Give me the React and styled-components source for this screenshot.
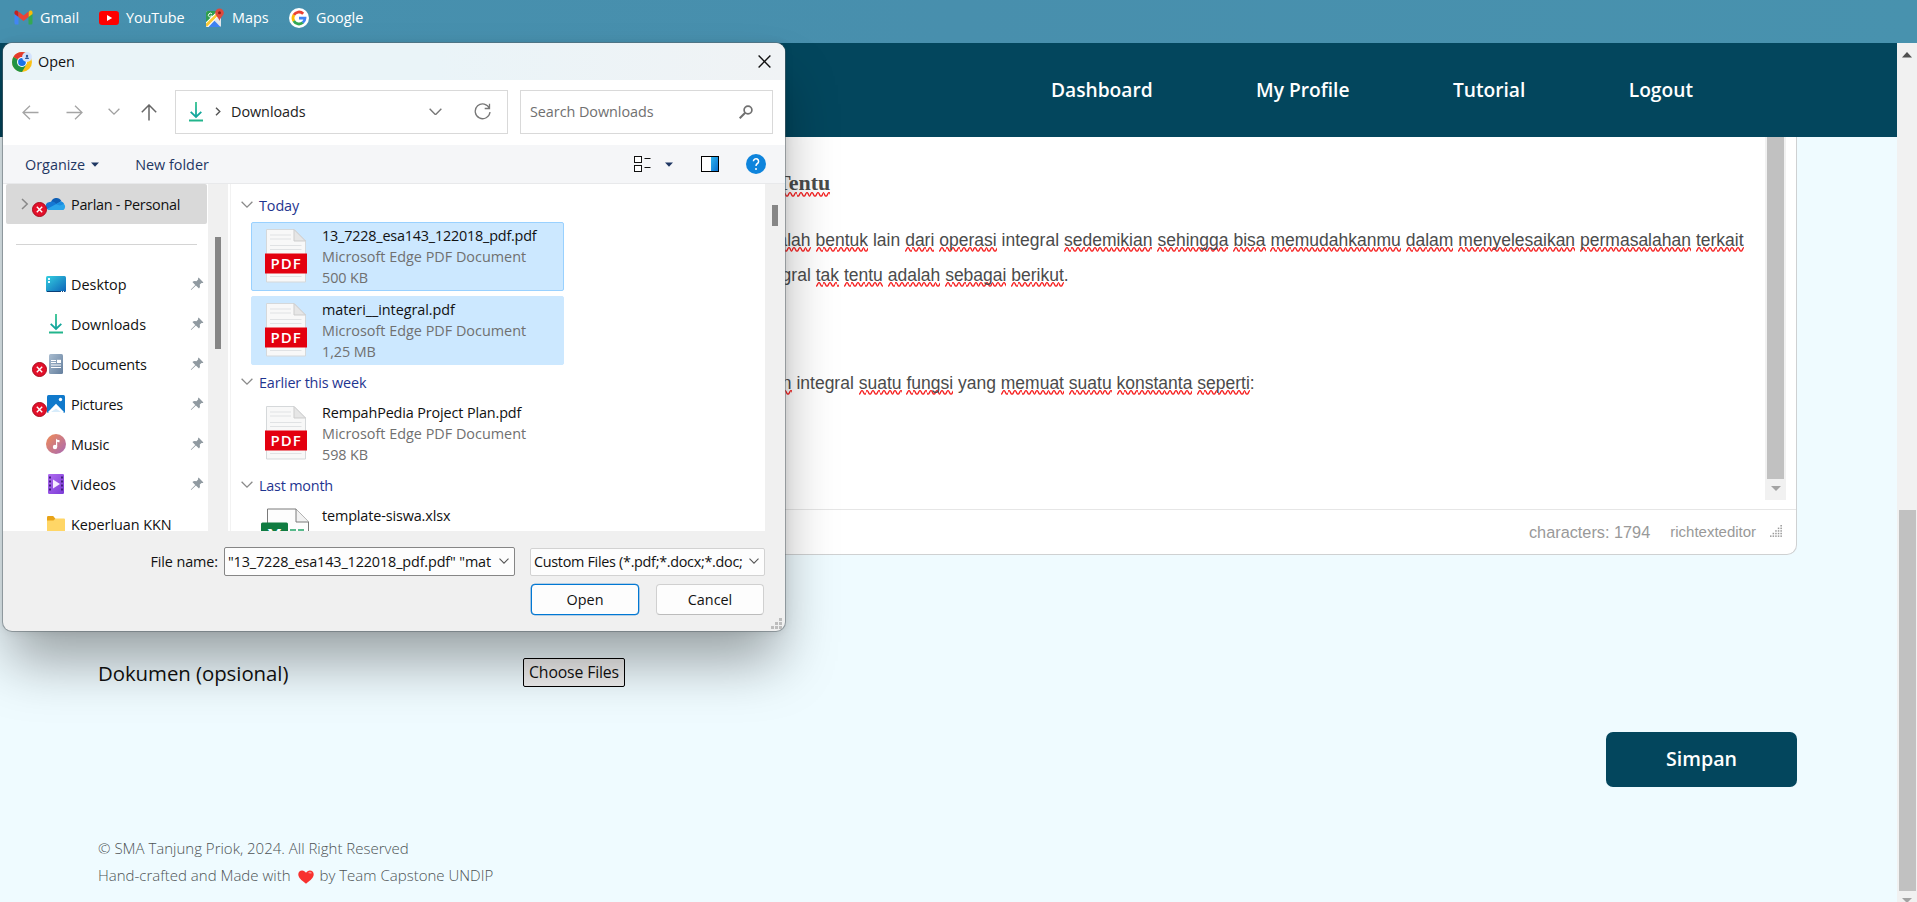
import React from "react";
import styled, { createGlobalStyle, css } from "styled-components";

const ui = `"Open Sans", "Noto Sans", sans-serif`;

const GlobalStyle = createGlobalStyle`
  * { box-sizing: border-box; }
  body { margin: 0; background: #effbff; font-family: ${ui}; overflow: hidden; }
  svg { display: block; flex: none; }
`;

const Screen = styled.div`
  position: relative;
  width: 1917px;
  height: 902px;
  display: flex;
  flex-direction: column;
  overflow: hidden;
  background: #effbff;
`;

/* ---------- bookmarks ---------- */
const BookmarkBar = styled.div`
  flex: none;
  height: 43px;
  padding: 0 0 8px 14px;
  display: flex;
  align-items: center;
  background: linear-gradient(90deg, #4690ae, #488fad 50%, #4892ae);
`;
const Bookmark = styled.div`
  display: flex;
  align-items: center;
  gap: 7px;
  width: ${(p) => p.$width}px;
  color: #fff;
  font-size: 14.4px;
  letter-spacing: ${(p) => p.$track || 0}px;
  white-space: nowrap;
`;

/* ---------- page ---------- */
const Viewport = styled.div`
  flex: 1;
  display: flex;
  min-height: 0;
`;
const Page = styled.div`
  flex: 1;
  display: flex;
  flex-direction: column;
  min-width: 0;
`;
const Nav = styled.nav`
  flex: none;
  height: 94px;
  padding: 0 204px 0 0;
  display: flex;
  justify-content: flex-end;
  align-items: center;
  gap: 103.4px;
  background: #03465d;
`;
const NavLink = styled.a`
  color: #fff;
  font-size: 19.2px;
  font-weight: 600;
  line-height: 28px;
`;
const Editor = styled.section`
  flex: none;
  width: 1274px;
  height: 418px;
  margin-left: 523px;
  display: flex;
  flex-direction: column;
  background: #fff;
  border: 1px solid #cfd1d2;
  border-top: 0;
  border-radius: 0 0 10px 10px;
`;
const EditorBody = styled.div`
  flex: none;
  display: flex;
  height: 373px;
  padding-right: 10px;
  padding-bottom: 9px;
  border-bottom: 1px solid #e6e6e6;
`;
const EditorText = styled.div`
  flex: 1;
  min-width: 0;
  color: #4b4b4b;
  font: 17.5px/35px "Liberation Sans", Arial, sans-serif;
`;
const Heading = styled.h2`
  margin: 28px 0 22px 252px;
  font: bold 22px/36px "Liberation Serif", "Times New Roman", serif;
`;
const Line = styled.p`
  margin: 0 0 ${(p) => p.$after || 0}px ${(p) => p.$indent}px;
  width: ${(p) => (p.$width ? `${p.$width}px` : "auto")};
  white-space: ${(p) => (p.$width ? "normal" : "nowrap")};
  text-align-last: ${(p) => (p.$width ? "justify" : "left")};
`;
const wave = encodeURIComponent(
  `<svg xmlns="http://www.w3.org/2000/svg" width="5.6" height="5" viewBox="0 0 5.6 5"><path d="M-1.400 2.400Q0 6 1.400 2.400T4.200 2.400T7 2.400" fill="none" stroke="#f61c1c" stroke-width="1.300"/></svg>`
);
const Misspelt = styled.span`
  padding-bottom: 2px;
  background: url("data:image/svg+xml,${wave}") repeat-x left bottom / 5.6px 5px;
`;
const InnerScroll = styled.div`
  width: 21px;
  padding: 0 2px;
  background: #f1f1f1;
`;
const InnerThumb = styled.div`
  height: 342px;
  margin-bottom: 7px;
  background: #c1c1c1;
`;
const EditorFooter = styled.div`
  flex: 1;
  display: flex;
  justify-content: flex-end;
  align-items: center;
  padding: 1px 14px 0 0;
  color: #999;
  font: 16.3px "Liberation Sans", Arial, sans-serif;
  svg { margin: -3px 0 0 14px; }
`;
const Brand = styled.span`
  margin-left: 20px;
  font-size: 15px;
  line-height: 18px;
  margin-top: -1px;
`;
const UploadRow = styled.div`
  flex: none;
  display: flex;
  align-items: center;
  height: 29px;
  margin: 103px 0 0 98px;
`;
const UploadLabel = styled.label`
  width: 425px;
  font-size: 20.4px;
  letter-spacing: -0.05px;
  color: #111;
`;
const ChooseButton = styled.button`
  width: 102px;
  height: 29px;
  padding: 0 0 1px;
  border: 1px solid #000;
  border-radius: 2px;
  background: #efefef;
  color: #111;
  font: 15.8px ${ui};
  letter-spacing: -0.15px;
  white-space: nowrap;
`;
const SaveButton = styled.button`
  flex: none;
  width: 191px;
  height: 55px;
  margin: 45px 0 0 1606px;
  padding: 0 0 3px;
  border: 0;
  border-radius: 7px;
  background: #03465d;
  color: #fff;
  font: 600 19.6px ${ui};
`;
const PageFooter = styled.footer`
  margin: 48px 0 0 98px;
  color: #4d5355;
  font-size: 15px;
  font-weight: 300;
  line-height: 27px;
`;
const FooterLine = styled.div`
  display: flex;
  align-items: center;
  white-space: nowrap;
  svg { margin: 2px 6px 0 7px; }
`;
const PageScroll = styled.div`
  flex: none;
  width: 20px;
  display: flex;
  flex-direction: column;
  align-items: center;
  padding: 9px 0 0 0;
  overflow: hidden;
  background: #f1f1f1;
`;
const PageThumb = styled.div`
  flex: none;
  width: 17px;
  height: 381px;
  margin: 452px 0 7px 1px;
  background: #c1c1c1;
`;

/* ---------- file dialog ---------- */
const Dialog = styled.div`
  position: absolute;
  left: 3px;
  top: 43px;
  width: 782px;
  height: 588px;
  display: flex;
  flex-direction: column;
  border-radius: 9px;
  background: #f0f0f0;
  color: #111;
  font-size: 14.4px;
  box-shadow: 0 0 0 1px rgba(90, 100, 105, 0.5), 0 0 8px rgba(0, 0, 0, 0.1), 0 36px 56px -6px rgba(0, 0, 0, 0.36);
`;
const Txt = styled.span`
  letter-spacing: ${(p) => p.$track || 0}px;
  white-space: nowrap;
`;
const TitleBar = styled.div`
  flex: none;
  height: 37px;
  padding: 0 14px 0 9px;
  display: flex;
  align-items: center;
  gap: 6px;
  border-radius: 9px 9px 0 0;
  background: linear-gradient(90deg, #eaf4f8, #eaf4f8 55%, #f0f3f5);
  svg:last-child { margin-left: auto; }
`;
const AddressRow = styled.div`
  flex: none;
  height: 65px;
  padding: 0 12px 1px 19px;
  display: flex;
  align-items: center;
  background: #fff;
`;
const NavIcons = styled.div`
  width: 153px;
  display: flex;
  align-items: center;
  svg:nth-child(2) { margin-left: 27px; }
  svg:nth-child(3) { margin-left: 25px; }
  svg:nth-child(4) { margin-left: 21px; }
`;
const Field = styled.div`
  width: ${(p) => p.$width}px;
  height: 44px;
  margin-right: ${(p) => p.$after || 0}px;
  padding: 0 16px 1px ${(p) => p.$pad}px;
  display: flex;
  align-items: center;
  border: 1px solid #d9d9d9;
  color: ${(p) => p.$color || "#222"};
`;
const Spacer = styled.div`
  flex: ${(p) => (p.$w ? "none" : 1)};
  width: ${(p) => p.$w || 0}px;
`;
const Toolbar = styled.div`
  flex: none;
  height: 39px;
  padding: 0 19px 0 22px;
  display: flex;
  align-items: center;
  background: #f5f6f8;
  border-bottom: 1px solid #e8e9eb;
  color: #1f3763;
`;
const Content = styled.div`
  flex: none;
  height: 347px;
  display: flex;
  overflow: hidden;
  background: #fff;
`;
const Sidebar = styled.div`
  width: 205px;
  padding-left: 3px;
`;
const SideRow = styled.div`
  position: relative;
  height: 40px;
  width: 201px;
  padding: 0 3px 0 38px;
  display: flex;
  align-items: center;
  background: ${(p) => (p.$active ? "#d9d9d9" : "transparent")};
  border-radius: 2px;
`;
const SideIcon = styled.div`
  width: 24px;
  margin-right: 3px;
  display: flex;
  justify-content: center;
`;
const SyncBadge = styled.div`
  position: absolute;
  left: 26px;
  top: 18px;
`;
const Expander = styled.div`
  position: absolute;
  left: 15px;
  top: 14px;
`;
const Separator = styled.div`
  height: 1px;
  width: 181px;
  margin: 20px 0 19px 10px;
  background: #d4d4d4;
`;
const ScrollTrack = styled.div`
  flex: none;
  width: 20px;
  padding: ${(p) => p.$top}px 7px 0;
  background: #f0f0f0;
`;
const ScrollThumb = styled.div`
  height: ${(p) => p.$height}px;
  width: 6px;
  background: #868686;
`;
const FileList = styled.div`
  flex: 1;
  margin-left: 2px;
  padding-left: 11px;
  border-left: 1px solid #f2f2f2;
`;
const Group = styled.div`
  height: 22px;
  margin-top: ${(p) => p.$before}px;
  margin-left: -1px;
  margin-bottom: 6px;
  display: flex;
  align-items: center;
  gap: 6px;
  color: #1f3590;
`;
const FileItem = styled.div`
  width: 313px;
  height: 69px;
  margin: 0 0 5px 9px;
  padding: 0 0 0 9px;
  display: flex;
  border: 1px solid ${(p) => (p.$focused ? "#99d1ff" : p.$selected ? "#cce8ff" : "transparent")};
  border-radius: 2px;
  background: ${(p) => (p.$selected ? "#cce8ff" : "transparent")};
`;
const FileInfo = styled.div`
  margin: 2px 0 0 11px;
  display: flex;
  flex-direction: column;
  line-height: 21px;
`;
const Meta = styled(Txt)`
  color: #707070;
`;
const FileIconBox = styled.div`
  width: 50px;
  padding: 5px 0 0 ${(p) => p.$pad || 0}px;
`;
const DialogFooter = styled.div`
  flex: 1;
  padding: 16px 20px 0 0;
`;
const FooterRow = styled.div`
  display: flex;
  justify-content: flex-end;
  align-items: center;
`;
const Combo = styled.div`
  width: ${(p) => p.$width}px;
  height: ${(p) => p.$height}px;
  margin-left: ${(p) => p.$before}px;
  padding: 0 5px 1px 3px;
  display: flex;
  align-items: center;
  justify-content: space-between;
  border: 1px solid ${(p) => p.$border};
  border-radius: 2px;
  background: #fdfdfd;
`;
const DialogButton = styled.button`
  width: 108px;
  height: 31px;
  margin: 8px ${(p) => (p.$primary ? 17 : 1)}px 0 0;
  padding: 0 0 1px;
  border: 1px solid #d0d0d0;
  border-bottom-color: #bcbcbc;
  border-radius: 4px;
  background: #fdfdfd;
  color: #111;
  font: 14.4px ${ui};
  ${(p) => p.$primary && css`border-color: #0078d4; box-shadow: 0 0 0 0.3px #0067c0;`}
`;
const ResizeGrip = styled.div`
  position: absolute;
  right: 3px;
  bottom: 2px;
`;

/* ---------- icons ---------- */
const Gmail = () => (
  <svg width="19" height="15" viewBox="0 0 19 15">
    <path d="M.5 3v10q0 1.500 1.500 1.500h2.500V6z" fill="#4285f4" />
    <path d="M18.500 3v10q0 1.500-1.500 1.500h-2.500V6z" fill="#34a853" />
    <path d="M14.500 2.500v4.500l4-3V2.500C18.500.6 16.500.2 15.300 1z" fill="#fbbc04" />
    <path d="M.5 2.500V4l4 3V2.500L3.700 1C2.500.2.5.6.5 2.500z" fill="#c5221f" />
    <path d="M4.500 7V1.600l5 3.900 5-3.900V7l-5 3.900z" fill="#ea4335" />
  </svg>
);
const YouTube = () => (
  <svg width="20" height="14" viewBox="0 0 20 14">
    <rect width="20" height="14" rx="3.200" fill="#f00" />
    <path d="M8 4l5.200 3L8 10z" fill="#fff" />
  </svg>
);
const Maps = () => (
  <svg width="20" height="20" viewBox="0 0 20 20">
    <path d="M1 4.500Q1 3 2.500 3H16v14.500q0 1.500-1.500 1.500H2.500Q1 19 1 17.500z" fill="#e3e6ea" />
    <path d="M1 4.500Q1 3 2.500 3H13L1 14.500z" fill="#2f9e4f" />
    <path d="M1 14.300L11.500 4l3 3L3.500 19H2.500Q1 19 1 17.500z" fill="#fff" />
    <path d="M1 15.600L12 5l1.800 1.700L2.200 18.500Q1 18.500 1 17.500z" fill="#fbc934" />
    <path d="M3.500 19l6-6.200 6 6.200z" fill="#3f83f2" />
    <path d="M6.900 5.800A2 2 0 1 0 7.300 8H5.500" stroke="#fff" strokeWidth="1" fill="none" />
    <path d="M14.500.5a4.300 4.300 0 0 1 4.300 4.300c0 3-3.300 4.200-4.300 8.200-1-4-4.300-5.200-4.300-8.200A4.300 4.300 0 0 1 14.500.5z" fill="#dd4b3e" />
    <circle cx="14.500" cy="4.800" r="1.500" fill="#8c1d18" />
  </svg>
);
const Google = () => (
  <svg width="20" height="20" viewBox="0 0 20 20">
    <circle cx="10" cy="10" r="10" fill="#fff" />
    <g fill="none" strokeWidth="2.800">
      <path d="M14.200 5.700A6 6 0 0 0 4.800 7" stroke="#ea4335" />
      <path d="M4.900 6.900a6 6 0 0 0 0 6.200" stroke="#fbbc05" />
      <path d="M4.800 13a6 6 0 0 0 9.100 1.500" stroke="#34a853" />
      <path d="M13.700 14.700A6 6 0 0 0 16 10.200h-6" stroke="#4285f4" />
    </g>
  </svg>
);
const Chrome = () => (
  <svg width="20" height="20" viewBox="0 0 20 20">
    <circle cx="10" cy="10" r="10" fill="#fbc116" />
    <path d="M10 10L1.340 5A10 10 0 0 1 18.660 5z" fill="#e33b2e" />
    <path d="M10 10L1.340 5A10 10 0 0 0 10 20l4.500-7.700z" fill="#229342" />
    <circle cx="10" cy="10" r="5" fill="#fff" />
    <circle cx="10" cy="10" r="3.900" fill="#1a73e8" />
    <circle cx="15" cy="5" r="4.900" fill="#d3e3fd" />
    <circle cx="15" cy="4" r="1.200" fill="#2b5797" />
    <path d="M12.900 7q.2-1.700 2.100-1.700T17.100 7z" fill="#2b5797" />
  </svg>
);
const Stroke = ({ w, h, d, color = "#8a8a8a", sw = 1.3 }) => (
  <svg width={w} height={h} viewBox={`0 0 ${w} ${h}`} fill="none" stroke={color} strokeWidth={sw}>
    <path d={d} />
  </svg>
);
const Close = () => <Stroke w={13} h={13} d="M.6.6l11.800 11.800M12.400.6L.6 12.400" color="#111" sw={1.4} />;
const Back = () => <Stroke w={17} h={15} d="M16.500 7.500H1M8 .7L1 7.500l7 6.800" color="#a5a5a5" />;
const Forward = () => <Stroke w={17} h={15} d="M.5 7.500H16M9 .7l7 6.800-7 6.800" color="#a5a5a5" />;
const ChevronDown = ({ color = "#8a8a8a", w = 12 }) => (
  <svg width={w} height={w * 0.6} viewBox="0 0 12 7.200" fill="none" stroke={color} strokeWidth="1.300">
    <path d="M.6.8L6 6.200 11.400.8" />
  </svg>
);
const Up = () => <Stroke w={16} h={17} d="M8 16.500V1.300M.8 8.200L8 1l7.200 7.200" color="#666" sw={1.5} />;
const Download = () => (
  <svg width="14" height="20" viewBox="0 0 14 20" fill="none">
    <defs>
      <linearGradient id="dl" x1="0" y1="0" x2="0" y2="1">
        <stop offset="0" stopColor="#35c48d" />
        <stop offset="1" stopColor="#10a3a3" />
      </linearGradient>
    </defs>
    <path d="M6.100 0h1.800v15H6.100z" fill="url(#dl)" />
    <path d="M1.700 9.800L7 15l5.300-5.200" stroke="#14a79b" strokeWidth="1.800" />
    <path d="M0 18.500h14" stroke="#22b58c" strokeWidth="2" />
  </svg>
);
const Refresh = () => (
  <Stroke w={17} h={17} d="M15.500 5.500A7.400 7.400 0 1 0 16 9M15.500 .8v4.700h-4.800" color="#777" />
);
const Search = () => (
  <svg width="14" height="14" viewBox="0 0 14 14" fill="none" stroke="#707070">
    <circle cx="9" cy="5" r="3.900" strokeWidth="1.700" />
    <path d="M6.200 7.800L.7 13.300" strokeWidth="2" />
  </svg>
);
const Caret = () => (
  <svg width="8" height="5" viewBox="0 0 8 5"><path d="M0 .5h8L4 4.800z" fill="#1f3763" /></svg>
);
const ViewMode = () => (
  <svg width="17" height="16" viewBox="0 0 17 16" fill="#fff" stroke="#111">
    <rect x=".5" y=".5" width="7" height="6" />
    <rect x=".5" y="9.500" width="7" height="6" />
    <path d="M10.500 2.500h6M10.500 11.500h6" />
  </svg>
);
const PreviewPane = () => (
  <svg width="18" height="16" viewBox="0 0 18 16">
    <defs>
      <linearGradient id="pp" x1="0" y1="0" x2="1" y2="1">
        <stop offset="0" stopColor="#2db4ee" />
        <stop offset="1" stopColor="#0a6fd0" />
      </linearGradient>
    </defs>
    <rect x=".5" y=".5" width="17" height="15" fill="#fff" stroke="#000" />
    <rect x="10" y="1" width="7" height="14" fill="url(#pp)" />
  </svg>
);
const Help = () => (
  <svg width="20" height="20" viewBox="0 0 20 20">
    <circle cx="10" cy="10" r="10" fill="#0e84dc" />
    <path d="M7.400 7.300a2.600 2.600 0 1 1 4 2.200q-1.400.9-1.400 2.600" fill="none" stroke="#fff" strokeWidth="1.500" />
    <circle cx="10" cy="15" r="1" fill="#fff" />
  </svg>
);
const OneDrive = () => (
  <svg width="20" height="14" viewBox="0 0 20 14">
    <path d="M5 5.500A5.500 5.500 0 0 1 15.300 4L9 9z" fill="#0f5fb5" />
    <path d="M4 13a4 4 0 0 1-.4-8q4-1.500 6.400 1.500l4 4z" fill="#1477d4" />
    <path d="M15 4.500A4.500 4.500 0 0 1 18 7q2.500 2.800-.5 6H4q-2 0-2.600-1.200z" fill="#2aa4ea" />
    <path d="M10 7.200l5-2.900 2.300 1.500.6 1.200-4 1.500z" fill="#1b8ce0" />
  </svg>
);
const Desktop = () => (
  <svg width="20" height="16" viewBox="0 0 20 16">
    <defs>
      <linearGradient id="dk" x1="0" y1="0" x2="1" y2="1">
        <stop offset="0" stopColor="#35cfe0" />
        <stop offset="1" stopColor="#0c62b8" />
      </linearGradient>
    </defs>
    <rect width="20" height="16" rx="1.500" fill="url(#dk)" />
    <path d="M1 15.500h18" stroke="#0a3f78" />
    <path d="M2 2h2v2H2zM2 5h2v2H2z" fill="#e9fbff" />
    <path d="M15 15h1v1h-1zM17 15h1v1h-1z" fill="#fff" />
  </svg>
);
const Documents = () => (
  <svg width="14" height="20" viewBox="0 0 14 20">
    <defs>
      <linearGradient id="dc" x1="0" y1="0" x2="1" y2="1">
        <stop offset="0" stopColor="#a9bdd0" />
        <stop offset="1" stopColor="#647e9d" />
      </linearGradient>
    </defs>
    <rect width="14" height="20" rx="1.500" fill="url(#dc)" />
    <path d="M2 6.500h5M2 8.500h5M2 11h10M2 13.500h10" stroke="#fff" />
    <rect x="8" y="5.800" width="4" height="3.200" fill="#fff" />
  </svg>
);
const Pictures = () => (
  <svg width="18" height="18" viewBox="0 0 18 18">
    <rect width="18" height="18" rx="1.500" fill="#1079cb" />
    <path d="M1 17l8-8.200L17 17q-.5 1-1 1H2q-.5 0-1-1z" fill="#fff" />
    <path d="M4 17l5-3.500 5 3.500z" fill="#d7ecfb" />
    <circle cx="13.500" cy="4.500" r="1.700" fill="#fff" />
  </svg>
);
const Music = () => (
  <svg width="20" height="20" viewBox="0 0 20 20">
    <defs>
      <linearGradient id="mu" x1="0" y1="0" x2="1" y2="1">
        <stop offset="0" stopColor="#f08c55" />
        <stop offset="1" stopColor="#a969b4" />
      </linearGradient>
    </defs>
    <circle cx="10" cy="10" r="10" fill="url(#mu)" />
    <circle cx="9" cy="13" r="2.200" fill="#fff" />
    <path d="M10 13V4.500q1 1.800 3.500 1.500v2.200Q12 8.500 11.200 7.800V13z" fill="#fff" />
  </svg>
);
const Videos = () => (
  <svg width="16" height="20" viewBox="0 0 16 20">
    <defs>
      <linearGradient id="vd" x1="0" y1="0" x2="1" y2="1">
        <stop offset="0" stopColor="#b06cf0" />
        <stop offset="1" stopColor="#7b3bd6" />
      </linearGradient>
    </defs>
    <rect width="16" height="20" rx="1.200" fill="url(#vd)" />
    <path d="M2 2.500v16M14 2.500v16" stroke="#41207c" strokeWidth="2" strokeDasharray="2 2" />
    <path d="M5 5.500l7 4.500-7 4.500z" fill="#f4ecff" />
  </svg>
);
const Folder = () => (
  <svg width="18" height="16" viewBox="0 0 18 16">
    <path d="M0 1.200Q0 0 1.200 0h5l2 2.500V6H0z" fill="#e8a317" />
    <path d="M0 4.500h6.500l2-2H17q1 0 1 1V15q0 1-1 1H1q-1 0-1-1z" fill="#ffd666" />
  </svg>
);
const Pin = () => (
  <svg width="14" height="14" viewBox="0 0 14 14" fill="#909aa1">
    <path d="M8.600.6l4.800 4.800q-.9.900-1.900.5L9.800 7.600q.7 2.600-.8 4L5.900 8.500 1.200 13l-.4-.4 4.500-4.700L2.400 5q1.500-1.500 4-.8l1.700-1.700q-.4-1 .5-1.900z" />
  </svg>
);
const SyncError = () => (
  <svg width="15" height="15" viewBox="0 0 15 15">
    <circle cx="7.500" cy="7.500" r="7" fill="#e3102a" stroke="#a80a1e" />
    <path d="M4.800 4.800l5.400 5.400M10.200 4.800l-5.400 5.400" stroke="#fff" strokeWidth="1.400" />
  </svg>
);
const PdfFile = () => (
  <svg width="42" height="56" viewBox="0 0 42 56">
    <path d="M1.500 1.500h27.500L40.500 13v41h-39z" fill="#f8f8f8" stroke="#d5d8da" />
    <path d="M29 1.500V13h11.500z" fill="#e6e6e6" stroke="#cdcdcd" />
    <path d="M5 7h21M5 11h21M5 17.500h31.500M5 21.500h31.500M5 48.500h31.500" stroke="#e0e2e4" />
    <rect y="25.500" width="42" height="20" fill="#e3000f" />
    <text x="21.200" y="40.500" textAnchor="middle" fill="#fff" fontFamily={ui} fontWeight="600" fontSize="15" letterSpacing="1">PDF</text>
  </svg>
);
const XlsFile = () => (
  <svg width="48" height="60" viewBox="0 0 48 60">
    <path d="M6.500 50V1H35l12.500 13v40h-41z" fill="#fdfdfd" stroke="#7a7a7a" />
    <path d="M35 1v13h12.500" fill="#f2f2f2" stroke="#7a7a7a" />
    <path d="M29 22h6M37 22h6" stroke="#21a366" strokeWidth="1.500" />
    <rect y="14.500" width="27" height="27" rx="1.500" fill="#107c41" />
    <text x="13.500" y="36" textAnchor="middle" fill="#fff" fontFamily={ui} fontWeight="700" fontSize="21">X</text>
  </svg>
);
const Heart = () => (
  <svg width="16" height="14" viewBox="0 0 16 14">
    <path d="M8 13.700C3 10 .3 7.600.3 4.300.3 2 2 .4 4.100.4 5.700.4 7.200 1.300 8 2.800 8.800 1.300 10.300.4 11.900.4c2.100 0 3.800 1.600 3.800 3.900 0 3.300-2.700 5.700-7.700 9.400z" fill="#f8312f" />
    <path d="M10.600 3q1.700-1.100 2.800.4" stroke="#ff8687" strokeWidth="1.400" fill="none" />
  </svg>
);
const Dots = ({ n, size, step, color }) => {
  const dots = [];
  for (let r = 0; r < n; r++)
    for (let c = n - 1 - r; c < n; c++)
      dots.push(<rect key={`${r}-${c}`} x={c * step} y={r * step} width={size} height={size} fill={color} />);
  const side = (n - 1) * step + size;
  return <svg width={side} height={side}>{dots}</svg>;
};
const ScrollArrow = ({ up }) => (
  <svg width={up ? 10 : 18} height="6" viewBox={up ? "0 0 10 6" : "-4 0 18 6"}>
    <path d={up ? "M0 5.500h10L5 0z" : "M0 0h10L5 5z"} fill={up ? "#505050" : "#a3a3a3"} />
  </svg>
);

/* ---------- data ---------- */
const bookmarks = [
  { icon: Gmail, label: "Gmail", width: 85, track: 0 },
  { icon: YouTube, label: "YouTube", width: 106, track: -0.1 },
  { icon: Maps, label: "Maps", width: 84, track: 0 },
  { icon: Google, label: "Google", width: 90, track: 0 },
];
const places = [
  { icon: Desktop, label: "Desktop", track: 0 },
  { icon: Download, label: "Downloads", track: 0 },
  { icon: Documents, label: "Documents", track: -0.15, error: true },
  { icon: Pictures, label: "Pictures", track: -0.25, error: true },
  { icon: Music, label: "Music", track: -0.2 },
  { icon: Videos, label: "Videos", track: 0.05 },
];

/* Words wrapped in underscores are flagged by the spell checker. */
const spell = (text) =>
  text.split(/(_[^_]+_)/).map((part, i) =>
    part.startsWith("_") ? <Misspelt key={i}>{part.slice(1, -1)}</Misspelt> : part
  );

const PdfItem = ({ name, size, selected, focused, track }) => (
  <FileItem $selected={selected} $focused={focused}>
    <FileIconBox $pad={4}><PdfFile /></FileIconBox>
    <FileInfo>
      <Txt $track={track}>{name}</Txt>
      <Meta>Microsoft Edge PDF Document</Meta>
      <Meta $track={-0.1}>{size}</Meta>
    </FileInfo>
  </FileItem>
);

function OpenDialog() {
  return (
    <Dialog>
      <TitleBar>
        <Chrome />
        <Txt>Open</Txt>
        <Close />
      </TitleBar>
      <AddressRow>
        <NavIcons><Back /><Forward /><ChevronDown color="#a0a0a0" /><Up /></NavIcons>
        <Field $width={333} $pad={13} $after={12}>
          <Download />
          <Spacer $w={12} />
          <Stroke w={6} h={9} d="M1 .8l3.800 3.700L1 8.200" color="#555" sw={1.4} />
          <Spacer $w={10} />
          <Txt $track={-0.05}>Downloads</Txt>
          <Spacer />
          <ChevronDown color="#777" w={13} />
          <Spacer $w={32} />
          <Refresh />
        </Field>
        <Field $width={253} $pad={9} $color="#707070">
          <Txt $track={-0.05}>Search Downloads</Txt>
          <Spacer />
          <Search />
          <Spacer $w={3} />
        </Field>
      </AddressRow>
      <Toolbar>
        <Txt>Organize</Txt>
        <Spacer $w={6} />
        <Caret />
        <Spacer $w={36} />
        <Txt>New folder</Txt>
        <Spacer />
        <ViewMode />
        <Spacer $w={14} />
        <Caret />
        <Spacer $w={28} />
        <PreviewPane />
        <Spacer $w={27} />
        <Help />
      </Toolbar>
      <Content>
        <Sidebar>
          <SideRow $active>
            <Expander><Stroke w={8} h={12} d="M1 1l5.200 5L1 11" color="#888" sw={1.5} /></Expander>
            <SyncBadge><SyncError /></SyncBadge>
            <SideIcon><OneDrive /></SideIcon>
            <Txt $track={-0.27}>Parlan - Personal</Txt>
          </SideRow>
          <Separator />
          {places.map(({ icon: Icon, label, error, track }) => (
            <SideRow key={label}>
              {error && <SyncBadge><SyncError /></SyncBadge>}
              <SideIcon><Icon /></SideIcon>
              <Txt $track={track}>{label}</Txt>
              <Spacer />
              <Pin />
            </SideRow>
          ))}
          <SideRow>
            <SideIcon><Folder /></SideIcon>
            <Txt $track={-0.05}>Keperluan KKN</Txt>
          </SideRow>
        </Sidebar>
        <ScrollTrack $top={53}><ScrollThumb $height={112} /></ScrollTrack>
        <FileList>
          <Group $before={10}><ChevronDown /><Txt $track={-0.1}>Today</Txt></Group>
          <PdfItem name="13_7228_esa143_122018_pdf.pdf" size="500 KB" selected focused track={-0.2} />
          <PdfItem name="materi__integral.pdf" size="1,25 MB" selected track={-0.05} />
          <Group $before={6}><ChevronDown /><Txt $track={-0.15}>Earlier this week</Txt></Group>
          <PdfItem name="RempahPedia Project Plan.pdf" size="598 KB" track={-0.13} />
          <Group $before={6}><ChevronDown /><Txt $track={-0.2}>Last month</Txt></Group>
          <FileItem>
            <FileIconBox $pad={-0}><XlsFile /></FileIconBox>
            <FileInfo><Txt $track={-0.12}>template-siswa.xlsx</Txt></FileInfo>
          </FileItem>
        </FileList>
        <ScrollTrack $top={21}><ScrollThumb $height={21} /></ScrollTrack>
      </Content>
      <DialogFooter>
        <FooterRow>
          <Txt $track={-0.1}>File name:</Txt>
          <Combo $width={291} $height={29} $before={6} $border="#868686">
            <Txt $track={-0.13}>"13_7228_esa143_122018_pdf.pdf" "mat</Txt>
            <ChevronDown w={10} color="#555" />
          </Combo>
          <Combo $width={235} $height={28} $before={15} $border="#d2d2d2">
            <Txt $track={-0.3}>Custom Files (*.pdf;*.docx;*.doc;</Txt>
            <ChevronDown w={10} color="#555" />
          </Combo>
        </FooterRow>
        <FooterRow>
          <DialogButton $primary>Open</DialogButton>
          <DialogButton>Cancel</DialogButton>
        </FooterRow>
      </DialogFooter>
      <ResizeGrip><Dots n={3} size={3} step={4} color="#bdbdbd" /></ResizeGrip>
    </Dialog>
  );
}

export default function App() {
  return (
    <Screen>
      <GlobalStyle />
      <BookmarkBar>
        {bookmarks.map(({ icon: Icon, label, width, track }) => (
          <Bookmark key={label} $width={width} $track={track}><Icon />{label}</Bookmark>
        ))}
      </BookmarkBar>
      <Viewport>
        <Page>
          <Nav>
            <NavLink>Dashboard</NavLink>
            <NavLink>My Profile</NavLink>
            <NavLink>Tutorial</NavLink>
            <NavLink>Logout</NavLink>
          </Nav>
          <Editor>
            <EditorBody>
              <EditorText>
                <Heading>{spell("_Tentu_")}</Heading>
                <Line $indent={234} $width={985.6}>
                  {spell("_adalah_ _bentuk_ lain _dari_ _operasi_ integral _sedemikian_ _sehingga_ _bisa_ _memudahkanmu_ _dalam_ _menyelesaikan_ _permasalahan_ _terkait_")}
                </Line>
                <Line $indent={229.4} $after={73}>{spell("integral _tak_ _tentu_ _adalah_ _sebagai_ _berikut_.")}</Line>
                <Line $indent={180}>{spell("_merupakan_ integral _suatu_ _fungsi_ yang _memuat_ _suatu_ _konstanta_ _seperti_:")}</Line>
              </EditorText>
              <InnerScroll>
                <InnerThumb />
                <ScrollArrow />
              </InnerScroll>
            </EditorBody>
            <EditorFooter>
              <span>characters: 1794</span>
              <Brand>richtexteditor</Brand>
              <Dots n={5} size={1.5} step={2.6} color="#999" />
            </EditorFooter>
          </Editor>
          <UploadRow>
            <UploadLabel>Dokumen (opsional)</UploadLabel>
            <ChooseButton>Choose Files</ChooseButton>
          </UploadRow>
          <SaveButton>Simpan</SaveButton>
          <PageFooter>
            <FooterLine>© SMA Tanjung Priok, 2024. All Right Reserved</FooterLine>
            <FooterLine>Hand-crafted and Made with <Heart /> by Team Capstone UNDIP</FooterLine>
          </PageFooter>
        </Page>
        <PageScroll>
          <ScrollArrow up />
          <PageThumb />
          <ScrollArrow />
        </PageScroll>
      </Viewport>
      <OpenDialog />
    </Screen>
  );
}
